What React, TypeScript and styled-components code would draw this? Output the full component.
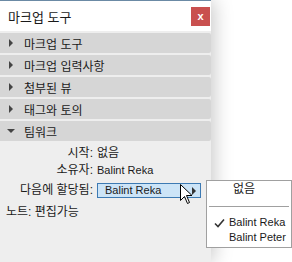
import React from 'react'
import styled, { createGlobalStyle } from 'styled-components'

const GlobalStyle = createGlobalStyle`
  html, body {
    margin: 0;
    padding: 0;
    background: #ffffff;
  }
  body {
    font-family: 'Liberation Sans', 'Noto Sans CJK KR', sans-serif;
    font-size: 12px;
    color: #1a1a1a;
  }
`

const Page = styled.div`
  width: 292px;
  height: 262px;
  overflow: hidden;
  position: relative;
`

const Panel = styled.div`
  width: 211px;
  height: 262px;
  background: #eeeeee;
  border-top: 1px solid #6b8aa5;
  box-sizing: border-box;
  box-shadow: 3px 0 18px rgba(0, 0, 0, 0.22);
  display: flex;
  flex-direction: column;
`

const TitleBar = styled.div`
  height: 30px;
  background: #ffffff;
  display: flex;
  align-items: center;
  justify-content: space-between;
  padding: 0 1px 0 8px;
  font-size: 13px;
`

const CloseButton = styled.div`
  width: 19px;
  height: 19px;
  background: #c9504f;
  color: #ffffff;
  font-weight: bold;
  font-size: 11px;
  display: flex;
  align-items: center;
  justify-content: center;
  line-height: 1;
`

const Sections = styled.div`
  display: flex;
  flex-direction: column;
  gap: 2px;
  padding-top: 2px;
`

const Header = styled.div`
  height: 20px;
  background: #d6d6d6;
  border-radius: 0 2px 2px 0;
  display: flex;
  align-items: center;
  gap: 9px;
  padding-left: 7px;
`

const Caret = styled.span<{ $open?: boolean }>`
  width: 0;
  height: 0;
  ${(p) =>
    p.$open
      ? `border-left: 4px solid transparent;
         border-right: 4px solid transparent;
         border-top: 4px solid #444;
         margin-left: 0;`
      : `border-top: 4px solid transparent;
         border-bottom: 4px solid transparent;
         border-left: 4px solid #444;
         margin: 0 2px 0 2px;`}
`

const Details = styled.div`
  display: grid;
  grid-template-columns: 93px auto;
  column-gap: 4px;
  row-gap: 0;
  padding: 4px 0 0 0;
  align-items: center;
`

const Label = styled.div`
  text-align: right;
  height: 17px;
  line-height: 17px;
  white-space: nowrap;
`

const Value = styled.div`
  height: 17px;
  line-height: 17px;
  white-space: nowrap;
`

// Latin names render a touch smaller than the Korean labels
const Name = styled.span`
  font-size: 11px;
`

const ComboRow = styled.div`
  margin-top: 3px;
`

const Combo = styled.div`
  width: 104px;
  height: 15px;
  box-sizing: border-box;
  border: 1px solid #3d7ab3;
  background: #cce4f7;
  display: flex;
  align-items: center;
  justify-content: space-between;
  padding: 0 4px 0 7px;
  line-height: 13px;
`

const RightArrow = styled.span`
  width: 0;
  height: 0;
  border-top: 4px solid transparent;
  border-bottom: 4px solid transparent;
  border-left: 4px solid #333;
`

const Note = styled.div`
  grid-column: 1 / 3;
  padding-left: 6px;
  margin-top: 5px;
  height: 17px;
  line-height: 17px;
`

const Menu = styled.div`
  position: absolute;
  left: 206px;
  top: 180px;
  width: 86px;
  height: 68px;
  box-sizing: border-box;
  background: #ffffff;
  border: 1px solid #a0a0a0;
  padding-top: 1px;
`

const MenuItem = styled.div<{ $center?: boolean }>`
  height: 15px;
  line-height: 15px;
  display: flex;
  align-items: center;
  padding-left: ${(p) => (p.$center ? '26px' : '7px')};
  gap: 4px;
  white-space: nowrap;
`

const Check = styled.span`
  width: 11px;
  display: inline-flex;
`

const Separator = styled.div`
  height: 1px;
  background: #a0a0a0;
  margin: 9px 2px 8px 2px;
`

const Cursor = styled.svg`
  position: absolute;
  left: 180px;
  top: 184px;
`

const sections = ['마크업 도구', '마크업 입력사항', '첨부된 뷰', '태그와 토의']

export default function App() {
  return (
    <Page>
      <GlobalStyle />
      <Panel>
        <TitleBar>
          <span>마크업 도구</span>
          <CloseButton>x</CloseButton>
        </TitleBar>
        <Sections>
          {sections.map((s) => (
            <Header key={s}>
              <Caret />
              <span>{s}</span>
            </Header>
          ))}
          <Header>
            <Caret $open />
            <span>팀워크</span>
          </Header>
        </Sections>
        <Details>
          <Label>시작:</Label>
          <Value>없음</Value>
          <Label>소유자:</Label>
          <Value>
            <Name>Balint Reka</Name>
          </Value>
          <ComboRow as={Label}>다음에 할당됨:</ComboRow>
          <ComboRow>
            <Combo>
              <Name>Balint Reka</Name>
              <RightArrow />
            </Combo>
          </ComboRow>
          <Note>노트: 편집가능</Note>
        </Details>
      </Panel>
      <Menu>
        <MenuItem $center>없음</MenuItem>
        <Separator />
        <MenuItem>
          <Check>
            <svg width="11" height="10" viewBox="0 0 11 10">
              <path d="M1 5.5 L4 8.5 L10 1.5" fill="none" stroke="#333" strokeWidth="1.6" />
            </svg>
          </Check>
          <Name>Balint Reka</Name>
        </MenuItem>
        <MenuItem>
          <Check />
          <Name>Balint Peter</Name>
        </MenuItem>
      </Menu>
      <Cursor width="13" height="21" viewBox="0 0 13 21">
        <path
          d="M0.5 0.5 L0.5 16.5 L4.5 12.5 L7.5 19.5 L9.5 18.5 L6.5 11.5 L12 11.5 Z"
          fill="#ffffff"
          stroke="#000000"
          strokeWidth="1"
          strokeLinejoin="miter"
        />
      </Cursor>
    </Page>
  )
}
